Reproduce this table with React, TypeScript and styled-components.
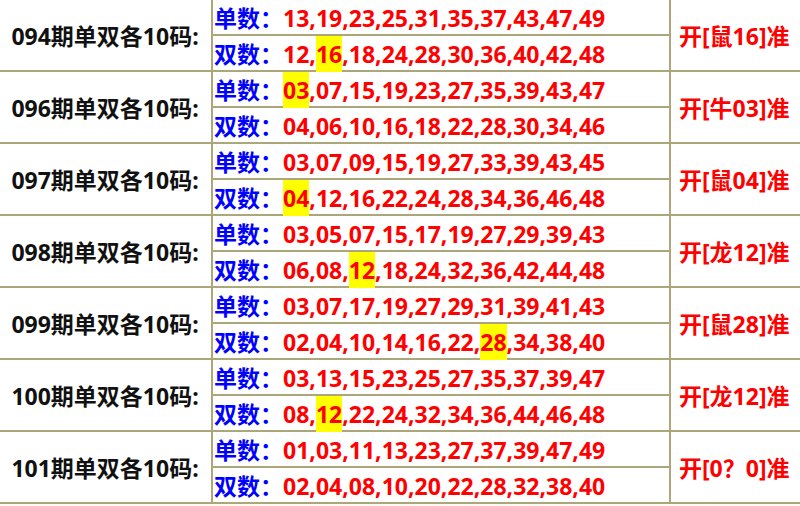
import React from "react";
import styled, { createGlobalStyle } from "styled-components";

const GlobalStyle = createGlobalStyle`
  html, body {
    margin: 0;
    padding: 0;
    background: #ffffff;
    overflow: hidden;
  }
`;

const Page = styled.div`
  width: 800px;
  height: 506px;
  overflow: hidden;
  background: #fbfaf0;
`;

const Table = styled.table`
  border-collapse: collapse;
  margin: -2px 0 0 -3px;
  width: 810px;
  table-layout: fixed;
  background: #ffffff;
  font-family: "Noto Sans", "Noto Sans CJK SC", sans-serif;
  font-weight: bold;
`;

const Cell = styled.td`
  border: 2px solid #aca77b;
  padding: 0;
  height: 36px;
  box-sizing: border-box;
`;

const LabelCell = styled(Cell)`
  text-align: center;
  font-size: 23px;
  color: #111111;
`;

const NumCell = styled(Cell)`
  padding-left: 1px;
  font-size: 23px;
  color: #ff0000;
  white-space: nowrap;
`;

const ResultCell = styled(Cell)`
  padding-left: 8px;
  font-size: 23px;
  color: #ff0000;
  white-space: nowrap;
`;

const Tag = styled.span`
  color: #0000ff;
`;

const Hit = styled.span`
  background: #ffff00;
  padding: 2px 0;
`;

interface Group {
  issue: string;
  odd: string[];
  even: string[];
  hit: string;
  result: string;
}

const groups: Group[] = [
  {
    issue: "094",
    odd: ["13", "19", "23", "25", "31", "35", "37", "43", "47", "49"],
    even: ["12", "16", "18", "24", "28", "30", "36", "40", "42", "48"],
    hit: "16",
    result: "开[鼠16]准",
  },
  {
    issue: "096",
    odd: ["03", "07", "15", "19", "23", "27", "35", "39", "43", "47"],
    even: ["04", "06", "10", "16", "18", "22", "28", "30", "34", "46"],
    hit: "03",
    result: "开[牛03]准",
  },
  {
    issue: "097",
    odd: ["03", "07", "09", "15", "19", "27", "33", "39", "43", "45"],
    even: ["04", "12", "16", "22", "24", "28", "34", "36", "46", "48"],
    hit: "04",
    result: "开[鼠04]准",
  },
  {
    issue: "098",
    odd: ["03", "05", "07", "15", "17", "19", "27", "29", "39", "43"],
    even: ["06", "08", "12", "18", "24", "32", "36", "42", "44", "48"],
    hit: "12",
    result: "开[龙12]准",
  },
  {
    issue: "099",
    odd: ["03", "07", "17", "19", "27", "29", "31", "39", "41", "43"],
    even: ["02", "04", "10", "14", "16", "22", "28", "34", "38", "40"],
    hit: "28",
    result: "开[鼠28]准",
  },
  {
    issue: "100",
    odd: ["03", "13", "15", "23", "25", "27", "35", "37", "39", "47"],
    even: ["08", "12", "22", "24", "32", "34", "36", "44", "46", "48"],
    hit: "12",
    result: "开[龙12]准",
  },
  {
    issue: "101",
    odd: ["01", "03", "11", "13", "23", "27", "37", "39", "47", "49"],
    even: ["02", "04", "08", "10", "20", "22", "28", "32", "38", "40"],
    hit: "",
    result: "开[0？0]准",
  },
];

function Numbers({ list, hit }: { list: string[]; hit: string }) {
  return (
    <>
      {list.map((n, i) => (
        <React.Fragment key={i}>
          {n === hit ? <Hit>{n}</Hit> : n}
          {i < list.length - 1 ? "," : ""}
        </React.Fragment>
      ))}
    </>
  );
}

export default function App() {
  return (
    <Page>
      <GlobalStyle />
      <Table>
        <colgroup>
          <col style={{ width: 214 }} />
          <col style={{ width: 458 }} />
          <col />
        </colgroup>
        <tbody>
          {groups.map((g) => (
            <React.Fragment key={g.issue}>
              <tr>
                <LabelCell rowSpan={2}>{g.issue}期单双各10码:</LabelCell>
                <NumCell>
                  <Tag>单数：</Tag>
                  <Numbers list={g.odd} hit={g.hit} />
                </NumCell>
                <ResultCell rowSpan={2}>{g.result}</ResultCell>
              </tr>
              <tr>
                <NumCell>
                  <Tag>双数：</Tag>
                  <Numbers list={g.even} hit={g.hit} />
                </NumCell>
              </tr>
            </React.Fragment>
          ))}
        </tbody>
      </Table>
    </Page>
  );
}
